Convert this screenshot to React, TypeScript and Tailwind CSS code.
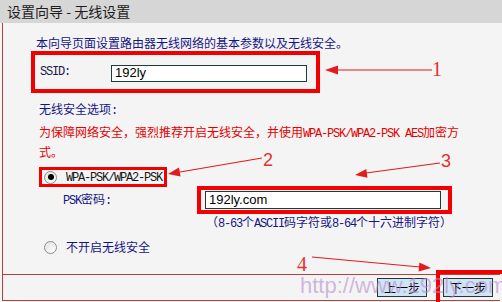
import React from "react";

const cjk = "font-['Noto_Sans_CJK_SC',sans-serif]";
const mono = "font-['Liberation_Mono',monospace] tracking-[-1.2px]";

function Mono({ children }: { children: React.ReactNode }) {
  return <span className={mono}>{children}</span>;
}

function Radio({ checked }: { checked?: boolean }) {
  return (
    <span className="flex h-[13px] w-[13px] shrink-0 items-center justify-center rounded-full border border-[#8c8c8c] bg-gradient-to-br from-[#e2e2e2] to-white">
      {checked && <span className="h-[6px] w-[6px] rounded-full bg-black" />}
    </span>
  );
}

function Arrows() {
  return (
    <svg className="pointer-events-none absolute inset-0" width="502" height="302">
      <g stroke="#e21b1b" strokeWidth="1.2" fill="none">
        <line x1="336" y1="70" x2="432" y2="70" />
        <line x1="180" y1="172" x2="262" y2="158" />
        <line x1="366" y1="173" x2="440" y2="163" />
        <line x1="312" y1="257" x2="420" y2="267" />
      </g>
      <g fill="#e21b1b">
        <polygon points="325,70 338,65.5 338,74.5" />
        <polygon points="168,174 179,167.6 180.6,176.4" />
        <polygon points="355,175 366.3,168.9 367.5,177.8" />
        <polygon points="431,268 418.6,271.4 419.4,262.4" />
      </g>
    </svg>
  );
}

export default function App() {
  return (
    <div className={`relative h-[302px] w-[502px] overflow-hidden bg-[#f4f4f4] ${cjk}`}>
      <div className="h-[23px] bg-[#d6d6d6] pl-[7px] text-[14px] leading-[23px] text-[#1c1c1c]">
        设置向导 - 无线设置
      </div>

      <div className="ml-[2px] flex h-[278px] w-[498px] flex-col border-b border-l border-[#b5423a]">
        <div className="h-[252px] border-b border-[#b5423a] pt-[11px] text-[12px] leading-[18px] text-[#161683]">
          <p className="ml-[33px]">本向导页面设置路由器无线网络的基本参数以及无线安全。</p>

          <div className="ml-[28px] mt-[-1px] flex h-[42px] w-[289px] items-center border-4 border-[#f20000] pl-[5px]">
            <span className={`w-[71px] text-[#1a1a4a] ${mono}`}>SSID:</span>
            <input
              readOnly
              value="192ly"
              className="mt-[2px] h-[17px] w-[196px] border border-[#1f3a3a] bg-white pl-[3px] font-['Liberation_Sans',sans-serif] text-[13px] text-black outline-none"
            />
          </div>

          <p className="ml-[36px] mt-[7px]">
            无线安全选项<Mono>:</Mono>
          </p>
          <p className="ml-[36px] mt-[3px] text-[#e40000]">
            为保障网络安全，强烈推荐开启无线安全，并使用<Mono>WPA-PSK/WPA2-PSK AES</Mono>加密方
            <br />
            式。
          </p>

          <div className="ml-[36px] mt-[6px] flex h-[20px] w-[128px] items-center gap-[9px] border-[3px] border-[#f20000] pl-[2px]">
            <Radio checked />
            <span className="text-[#161616]">
              <Mono>WPA-PSK/WPA2-PSK</Mono>
            </span>
          </div>

          <div className="mt-[-1px] flex items-center">
            <span className="ml-[60px] w-[134px]">
              <Mono>PSK</Mono>密码<Mono>:</Mono>
            </span>
            <div className="flex h-[28px] w-[255px] items-center border-4 border-[#f20000] pl-[4px]">
              <input
                readOnly
                value="192ly.com"
                className="h-[18px] w-[236px] border border-[#1f3a3a] bg-white pl-[3px] font-['Liberation_Sans',sans-serif] text-[13px] text-black outline-none"
              />
            </div>
          </div>

          <p className="ml-[203px] mt-[-1px]">
            （<Mono>8-63</Mono>个<Mono>ASCII</Mono>码字符或<Mono>8-64</Mono>个十六进制字符）
          </p>

          <div className="ml-[41px] mt-[4px] flex h-[20px] items-center gap-[9px]">
            <Radio />
            <span>不开启无线安全</span>
          </div>
        </div>

        <div className="flex flex-1 items-center justify-end gap-[16px] pr-[7px]">
          <button className="h-[19px] w-[50px] border border-[#1f3a3a] bg-[#cfe5f6] text-[12px] leading-[17px] text-black">
            上一步
          </button>
          <button className="h-[19px] w-[50px] border border-[#1f3a3a] bg-[#cfe5f6] text-[12px] leading-[17px] text-black">
            下一步
          </button>
        </div>
      </div>

      <div className="absolute left-[436px] top-[270px] h-[36px] w-[70px] border-4 border-[#f20000]" />

      <Arrows />

      <span className="absolute left-[432px] top-[57px] font-['Liberation_Serif',serif] text-[20px] leading-[24px] text-[#e23030]">1</span>
      <span className="absolute left-[263px] top-[148px] font-['Liberation_Sans',sans-serif] text-[18px] font-light leading-[24px] text-[#e23030]">2</span>
      <span className="absolute left-[441px] top-[149px] font-['Liberation_Sans',sans-serif] text-[18px] font-light leading-[24px] text-[#e23030]">3</span>
      <span className="absolute left-[297px] top-[252px] font-['Liberation_Serif',serif] text-[20px] leading-[24px] text-[#e23030]">4</span>

      <span className="pointer-events-none absolute left-[300px] top-[273px] font-['Liberation_Sans',sans-serif] text-[22px] leading-[26px] text-[#b68bcc]/60">
        http://www.192ly.com
      </span>
    </div>
  );
}
